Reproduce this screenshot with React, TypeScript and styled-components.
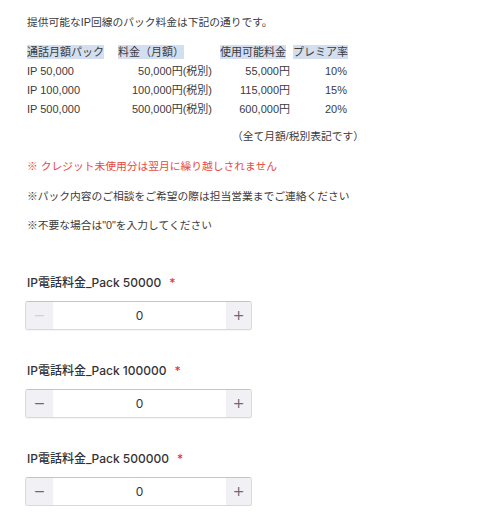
import React from "react"
import styled, { createGlobalStyle } from "styled-components"

const GlobalStyle = createGlobalStyle`
    html, body {
        margin: 0;
        padding: 0;
        background: #ffffff;
    }
    body {
        font-family: "Liberation Sans", "Noto Sans CJK JP", sans-serif;
        color: #3b3b3b;
    }
`;

type Column = { width: number; pl: number; pr: number };

const columns: Column[] = [
    { width: 91, pl: 0, pr: 0 },
    { width: 100, pl: 0, pr: 6 },
    { width: 75, pl: 2, pr: 3 },
    { width: 57, pl: 0, pr: 3 },
];

const headers = ["通話月額パック", "料金（月額）", "使用可能料金", "プレミア率"];

const rows = [
    ["IP 50,000", "50,000円(税別)", "55,000円", "10%"],
    ["IP 100,000", "100,000円(税別)", "115,000円", "15%"],
    ["IP 500,000", "500,000円(税別)", "600,000円", "20%"],
];

const packs = [
    { label: "IP電話料金_Pack 50000", disabled: true },
    { label: "IP電話料金_Pack 100000", disabled: false },
    { label: "IP電話料金_Pack 500000", disabled: false },
];

const App = (): JSX.Element => {
    return (
        <>
            <GlobalStyle />
            <Page>
                <Intro>提供可能なIP回線のパック料金は下記の通りです。</Intro>
                <PriceTable>
                    {headers.map((h, i) => (
                        <Cell key={h} $pl={columns[i].pl} $pr={0} $align="left">
                            <Selected>{h}</Selected>
                        </Cell>
                    ))}
                    {rows.map((row) =>
                        row.map((value, i) => (
                            <Cell
                                key={row[0] + i}
                                $pl={0}
                                $pr={columns[i].pr}
                                $align={i === 0 ? "left" : "right"}
                            >
                                {value}
                            </Cell>
                        ))
                    )}
                </PriceTable>
                <Footnote>（全て月額/税別表記です）</Footnote>
                <Notes>
                    <Note $warn>※ クレジット未使用分は翌月に繰り越しされません</Note>
                    <Note>※パック内容のご相談をご希望の際は担当営業までご連絡ください</Note>
                    <Note>※不要な場合は"0"を入力してください</Note>
                </Notes>
                <Fields>
                    {packs.map((p) => (
                        <Field key={p.label}>
                            <Label>
                                {p.label}
                                <Required>*</Required>
                            </Label>
                            <Stepper>
                                <StepButton $side="left" $disabled={p.disabled}>−</StepButton>
                                <StepValue>0</StepValue>
                                <StepButton $side="right">+</StepButton>
                            </Stepper>
                        </Field>
                    ))}
                </Fields>
            </Page>
        </>
    )
}

const Page = styled.div`
    padding: 13px 0 0 27px;
    font-size: 10.75px;
    line-height: 19px;
`;

const Intro = styled.p`
    margin: 0 0 11px;
`;

const PriceTable = styled.div`
    display: grid;
    grid-template-columns: ${columns.map((c) => `${c.width}px`).join(" ")};
    grid-auto-rows: 19px;
    font-size: 11px;
`;

const Cell = styled.div<{ $pl: number; $pr: number; $align: string }>`
    padding-left: ${(p) => p.$pl}px;
    padding-right: ${(p) => p.$pr}px;
    text-align: ${(p) => p.$align};
    white-space: nowrap;
`;

const Selected = styled.span`
    background: #d3deef;
    padding: 1px 0;
`;

const Footnote = styled.p`
    margin: 8px 0 0;
    width: 337px;
    text-align: right;
`;

const Notes = styled.div`
    display: flex;
    flex-direction: column;
    gap: 10.5px;
    margin-top: 11px;
`;

const Note = styled.p<{ $warn?: boolean }>`
    margin: 0;
    color: ${(p) => (p.$warn ? "#e6493f" : "#3b3b3b")};
`;

const Fields = styled.div`
    display: flex;
    flex-direction: column;
    gap: 32px;
    margin-top: 39px;
`;

const Field = styled.div`
    display: flex;
    flex-direction: column;
    gap: 9px;
`;

const Label = styled.label`
    font-family: "Inter", "Noto Sans CJK JP", sans-serif;
    font-size: 12px;
    font-weight: 500;
    line-height: 18px;
    color: #333337;
`;

const Required = styled.span`
    color: #e53935;
    margin-left: 8px;
`;

const Stepper = styled.div`
    display: flex;
    width: 227px;
    height: 29px;
    margin-left: -2px;
    box-sizing: border-box;
    border: 1px solid #d7d8e0;
    border-top-color: #c3c4d0;
    border-radius: 3px;
    box-shadow: 0 1px 0 rgba(0, 0, 0, 0.04);
    overflow: hidden;
    background: #ffffff;
`;

const StepButton = styled.div<{ $side: "left" | "right"; $disabled?: boolean }>`
    display: flex;
    align-items: center;
    justify-content: center;
    width: ${(p) => (p.$side === "left" ? 27 : 25)}px;
    background: #f1f1f5;
    color: ${(p) => (p.$disabled ? "#cfcfd6" : "#6a6a72")};
    font-family: "DejaVu Sans", sans-serif;
    font-size: 14px;
`;

const StepValue = styled.div`
    flex: 1;
    display: flex;
    align-items: center;
    justify-content: center;
    font-family: "Inter", sans-serif;
    font-size: 12px;
    color: #333338;
`;

export default App
